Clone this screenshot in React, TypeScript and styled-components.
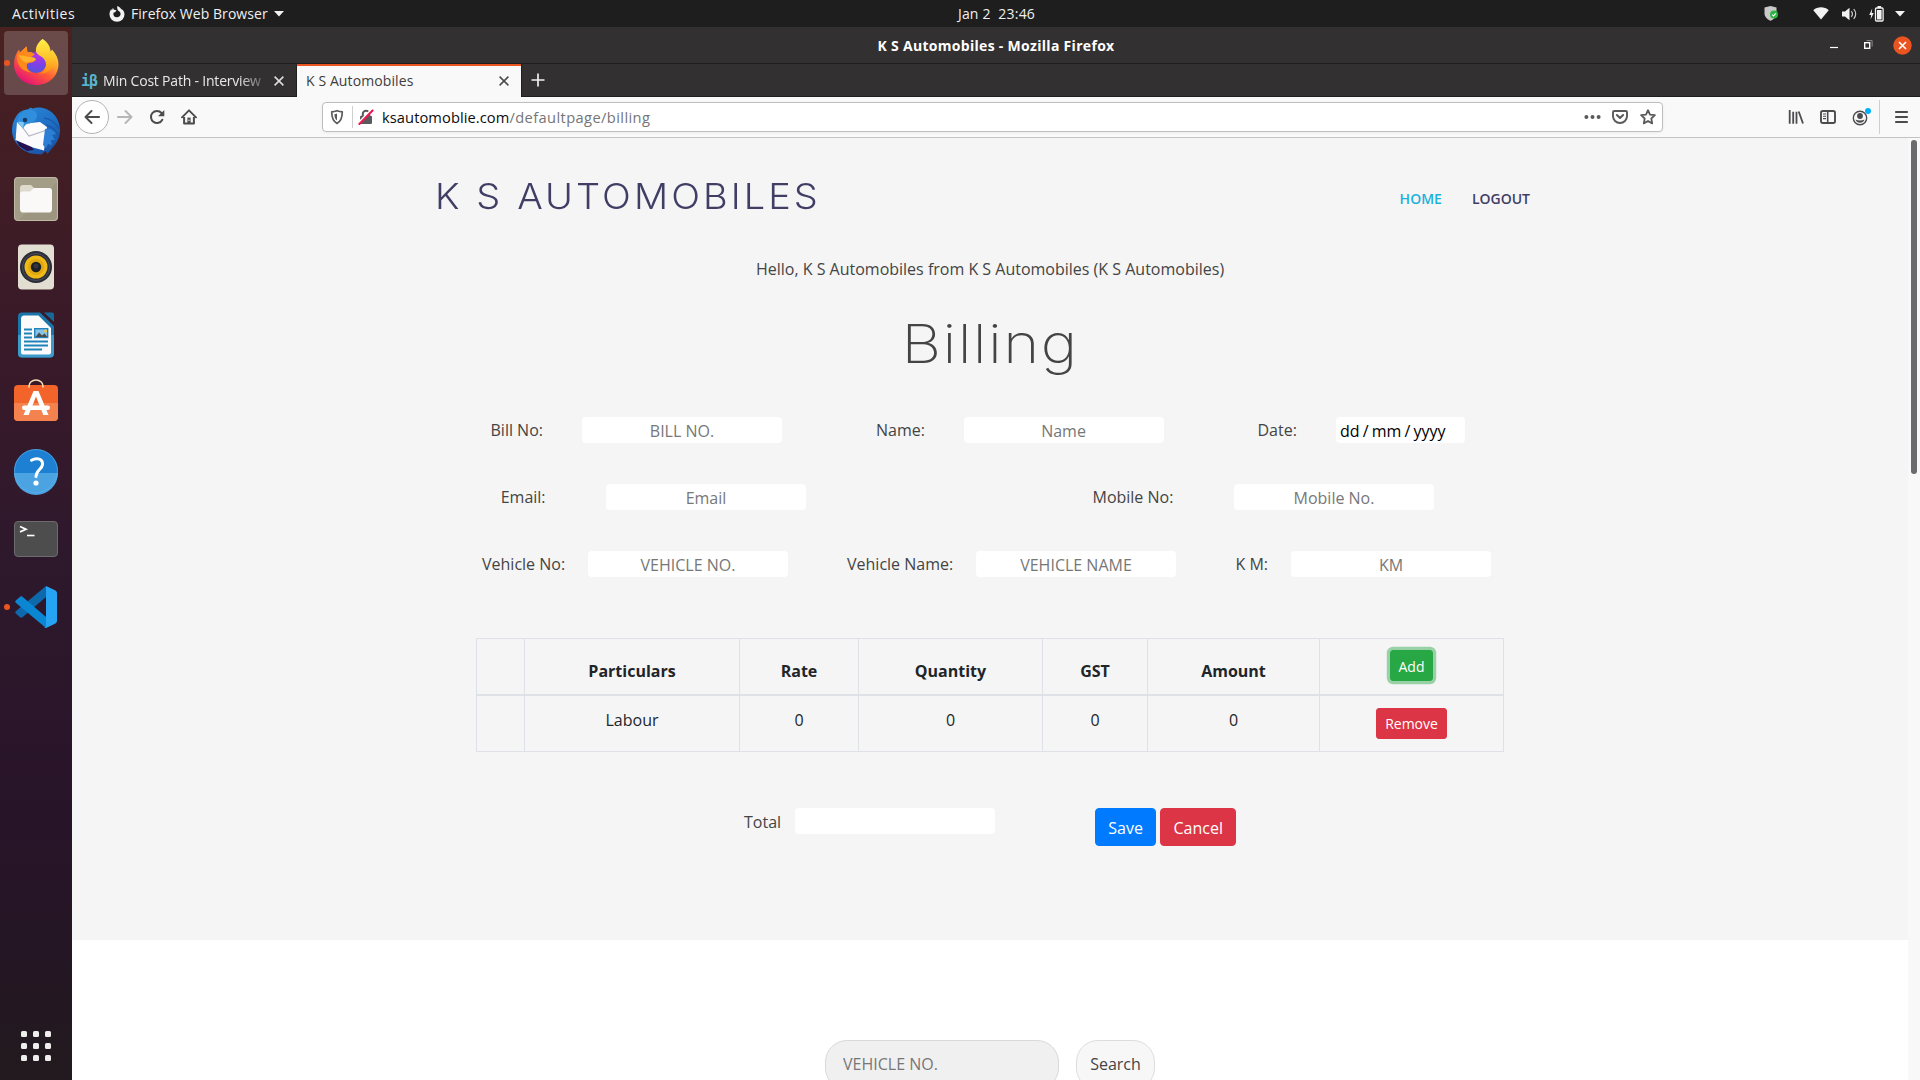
import React from "react";
import styled, { createGlobalStyle } from "styled-components";

const GlobalStyle = createGlobalStyle`
  * { box-sizing: border-box; }
  html, body { margin: 0; padding: 0; overflow: hidden; background: #fff; }
  body { font-family: "Open Sans", "Noto Sans", sans-serif; font-size: 16px; line-height: 24px; color: #444; }
  svg { display: block; flex: none; }
`;

/* ---------- desktop shell ---------- */

const Desktop = styled.div`
  width: 1920px;
  height: 1080px;
  display: grid;
  grid-template: 27px 1053px / 72px 1848px;
  overflow: hidden;
`;

const TopBar = styled.header`
  grid-column: 1 / -1;
  display: grid;
  grid-template-columns: 1fr auto 1fr;
  align-items: center;
  background: #1e1e1e;
  color: #f0f0f0;
  font-size: 14px;
  line-height: 26px;
`;

const TopLeft = styled.div`
  display: flex;
  align-items: center;
  padding-left: 12px;
`;

const Activities = styled.span`
  width: 97px;
  letter-spacing: 0.55px;
`;

const AppName = styled.span`
  margin: 0 6px 0 6px;
  letter-spacing: 0.05px;
`;

const Clock = styled.span`
  white-space: pre;
  letter-spacing: 0.2px;
  margin-left: 73px;
`;

const TopRight = styled.div`
  display: flex;
  align-items: center;
  justify-content: flex-end;
  padding-right: 15px;
`;

const Spacer = styled.span<{ $w: number }>`
  flex: none;
  width: ${(p) => p.$w}px;
`;

const Dock = styled.nav`
  display: flex;
  flex-direction: column;
  justify-content: space-between;
  background: linear-gradient(180deg, #49221f 0%, #431e24 10%, #391a29 30%, #2e182c 50%, #281429 75%, #241624 88%, #221a1e 100%);
  padding: 2px 0 16px;
`;

const DockList = styled.div`
  display: flex;
  flex-direction: column;
`;

const SlotHighlight = styled.div<{ $active?: boolean }>`
  width: 64px;
  height: 64px;
  border-radius: 4px;
  display: flex;
  align-items: center;
  background: ${(p) => (p.$active ? "rgba(255,255,255,0.19)" : "transparent")};
`;

const SlotRow = styled.div`
  height: 68px;
  padding: 2px 4px;
`;

const RunDot = styled.i<{ $on?: boolean }>`
  width: 6px;
  height: 6px;
  border-radius: 50%;
  background: ${(p) => (p.$on ? "#e95420" : "transparent")};
`;

const AppsGrid = styled.div`
  display: grid;
  grid-template-columns: repeat(3, 6px);
  gap: 6px;
  padding-left: 21px;
  padding-bottom: 3px;
`;

const AppsDot = styled.i`
  height: 6px;
  border-radius: 1.5px;
  background: #f0eeec;
`;

/* ---------- browser chrome ---------- */

const Window = styled.section`
  display: grid;
  grid-template-rows: 36px 34px 41px 1fr;
  min-height: 0;
  overflow: hidden;
`;

const TitleBar = styled.div`
  display: grid;
  grid-template-columns: 1fr auto 1fr;
  align-items: center;
  background: #333031;
`;

const WindowTitle = styled.b`
  color: #fff;
  font-size: 14px;
  line-height: 34px;
  padding-top: 2px;
  letter-spacing: 0.3px;
`;

const WindowButtons = styled.div`
  display: flex;
  justify-content: flex-end;
  align-items: center;
  padding-right: 8px;
`;

const TabStrip = styled.div`
  display: flex;
  background: #333031;
  border-top: 1px solid #1e1e1e;
`;

const Tab = styled.div<{ $active?: boolean }>`
  width: ${(p) => (p.$active ? 224 : 225)}px;
  display: flex;
  align-items: center;
  font-size: 14px;
  color: ${(p) => (p.$active ? "#3d3d3d" : "#e8e8e8")};
  background: ${(p) => (p.$active ? "#f9f9f9" : "transparent")};
  border-top: 2px solid ${(p) => (p.$active ? "#e95420" : "transparent")};
  border-bottom: 1px solid ${(p) => (p.$active ? "#f9f9f9" : "#1e1e1e")};
  border-right: ${(p) => (p.$active ? "none" : "1px solid #1e1e1e")};
  padding: 0 11px 0 9px;
`;

const TabRest = styled.div`
  flex: 1;
  display: flex;
  align-items: center;
  border-left: 1px solid #1e1e1e;
  border-bottom: 1px solid #1e1e1e;
  padding-left: 9px;
`;

const Favicon = styled.span`
  width: 22px;
  color: #57b4cc;
  font: bold 15px/20px "DejaVu Sans Mono", monospace;
  letter-spacing: -1px;
`;

const TabTitle = styled.span<{ $faded?: boolean }>`
  flex: 1;
  min-width: 0;
  white-space: nowrap;
  line-height: 24px;
  letter-spacing: ${(p) => (p.$faded ? -0.2 : 0.1)}px;
  ${(p) => p.$faded && "mask-image: linear-gradient(90deg, #000 80%, transparent 99%);"}
`;

const Toolbar = styled.div`
  display: flex;
  align-items: center;
  background: #f9f9fa;
  border-bottom: 1px solid #c4c4c4;
  padding-left: 3px;
`;

const BackButton = styled.span`
  width: 34px;
  height: 34px;
  border-radius: 50%;
  border: 1px solid #b4b4b4;
  background: #fff;
  display: grid;
  place-items: center;
  margin-right: 8px;
`;

const UrlBar = styled.div`
  width: 1341px;
  height: 30px;
  display: flex;
  align-items: center;
  background: #fff;
  border: 1px solid #bebebe;
  border-radius: 4px;
  padding: 0 6px 0 6px;
  box-shadow: 0 1px 3px rgba(0, 0, 0, 0.06);
`;

const UrlDivider = styled.i<{ $h: number }>`
  width: 1px;
  height: ${(p) => p.$h}px;
  background: #cfcfd0;
  flex: none;
`;

const UrlText = styled.span`
  flex: 1;
  font-size: 14.67px;
  color: #757577;
  letter-spacing: 0.4px;
  padding-left: 8px;
`;

const UrlHost = styled.span`
  color: #0c0c0d;
  letter-spacing: 0.08px;
`;

/* ---------- page ---------- */

const Viewport = styled.main`
  display: grid;
  grid-template-columns: 1836px 12px;
  min-height: 0;
  overflow: hidden;
`;

const Page = styled.div`
  background: #fff;
  overflow: hidden;
`;

const ScrollTrack = styled.div`
  background: #f8f8f8;
  padding: 2px 3px;
`;

const ScrollThumb = styled.div`
  width: 6px;
  height: 334px;
  border-radius: 3px;
  background: #6b6b6d;
`;

const BillingSection = styled.section`
  height: 802px;
  background: #f5f5f5;
  padding-left: 348px;
`;

const SiteHeader = styled.header`
  height: 119px;
  width: 1140px;
  padding: 33px 30px 0 15px;
  display: flex;
  justify-content: space-between;
`;

const Logo = styled.h1`
  margin: 0;
  font-family: "Inter", "Lato", sans-serif;
  font-weight: 300;
  font-size: 34.7px;
  line-height: 50px;
  letter-spacing: 2.8px;
  color: #413e66;
  transform: scaleX(1.094);
  transform-origin: 0 50%;
`;

const SiteNav = styled.nav`
  display: flex;
  gap: 30px;
  font-size: 14px;
  font-weight: 600;
  line-height: 56px;
`;

const NavLink = styled.a<{ $active?: boolean }>`
  color: ${(p) => (p.$active ? "#1bb1dc" : "#413e66")};
`;

const Greeting = styled.p`
  margin: 0;
  width: 1140px;
  text-align: center;
`;

const PageTitle = styled.h2`
  margin: 29px 0 0;
  width: 1140px;
  text-align: center;
  font-family: "Inter", "Lato", sans-serif;
  font-weight: 250;
  font-size: 54px;
  line-height: 68px;
  letter-spacing: 1.2px;
  color: #444;
  transform: scaleX(1.14);
`;

const FormRow = styled.div<{ $cols: string; $top: number }>`
  display: grid;
  grid-template-columns: ${(p) => p.$cols};
  height: 26px;
  margin-top: ${(p) => p.$top}px;
`;

const Label = styled.label`
  white-space: nowrap;
  padding-top: 1px;
`;

const TextInput = styled.input`
  width: 200px;
  height: 26px;
  border: 0;
  border-radius: 4px;
  background: #fff;
  padding: 2px 2px 0;
  font: 16px "Open Sans", sans-serif;
  text-align: center;
  color: #444;
  &::placeholder { color: #777; opacity: 1; }
`;

const DateInput = styled.div`
  width: 129px;
  height: 26px;
  border-radius: 4px;
  background: #fff;
  color: #000;
  padding: 2px 4px 0;
  word-spacing: -1px;
  white-space: nowrap;
`;

const ItemsTable = styled.table`
  width: 1027px;
  margin: 61px 0 0 56px;
  table-layout: fixed;
  border-collapse: collapse;
  color: #212529;
  text-align: center;
  th, td { border: 1px solid #dee2e6; padding: 12px 0; }
  th { height: 56px; padding-bottom: 11px; vertical-align: bottom; border-bottom-width: 2px; }
  th:last-child { vertical-align: top; padding: 11px 0 0; }
  td { height: 56px; vertical-align: top; }
`;

const Button = styled.button<{ $tone: string; $small?: boolean; $ring?: boolean }>`
  display: inline-block;
  vertical-align: top;
  height: ${(p) => (p.$small ? 31 : 38)}px;
  padding: ${(p) => (p.$small ? "1px 8px 0" : "3px 12.3px 0")};
  border: 1px solid ${(p) => p.$tone};
  border-radius: ${(p) => (p.$small ? 3 : 4)}px;
  background: ${(p) => p.$tone};
  color: #fff;
  font: ${(p) => (p.$small ? 14 : 16)}px "Open Sans", sans-serif;
  box-shadow: ${(p) => (p.$ring ? "0 0 0 3.2px rgba(40,167,69,0.45)" : "none")};
`;

const TotalRow = styled.div`
  display: flex;
  margin: 56px 0 0 324px;
`;

const TotalLabel = styled.label`
  width: 51px;
  padding-top: 2px;
`;

const Actions = styled.div`
  display: flex;
  gap: 4px;
  margin-left: 100px;
`;

const SearchSection = styled.section`
  padding: 100px 0 0 753px;
  display: flex;
  gap: 17px;
`;

const SearchInput = styled.input`
  width: 234px;
  height: 50px;
  flex: none;
  border: 1px solid #d9d9d9;
  border-radius: 22px;
  background: #f0f0f0;
  padding: 0 17px 2px;
  font: 16px "Open Sans", sans-serif;
  &::placeholder { color: #777; opacity: 1; }
`;

const SearchButton = styled.button`
  width: 79px;
  height: 50px;
  flex: none;
  border: 1px solid #ddd;
  border-radius: 22px;
  background: #f7f7f7;
  color: #444;
  padding: 0 0 2px;
  font: 16px "Open Sans", sans-serif;
`;

/* ---------- icons ---------- */

const Caret = () => (
  <svg width="10" height="6" viewBox="0 0 10 6"><path d="M0 0h10L5 5.6z" fill="#f2f2f2" /></svg>
);

const CloseX = ({ color }: { color: string }) => (
  <svg width="12" height="12" viewBox="0 0 12 12"><path d="M1.600 1.600l8.800 8.800M10.400 1.600l-8.800 8.800" stroke={color} strokeWidth="1.500" /></svg>
);

const FirefoxMono = () => (
  <svg width="16" height="16" viewBox="0 0 16 16">
    <path fill="#f2f2f2" fillRule="evenodd" d="M8.400 0c2.200.9 3.200 2 3.700 3.100C14.200 4 15.500 6 15.500 8.500A7.500 7.300 0 0 1 .5 8.500c0-2.200.6-4 1.800-5.500l.5 1.400L4 1.800l.8 1.900c1.200-.1 2 .2 2.700.8L6 6.200l-1.600.5C4 9.800 5.500 11.300 8 11.300c2.100 0 3.600-1.300 3.600-3.200 0-1.500-.8-2.600-2-3.100C8.300 3.700 7.900 1.800 8.400 0z" />
  </svg>
);

const ShieldStatus = () => (
  <svg width="15" height="17" viewBox="0 0 15 17">
    <path d="M6.500 1l6 1.600v5.600c0 3.600-2.600 6-6 7.600-3.400-1.600-6-4-6-7.600V2.600z" fill="#c9c9c9" />
    <circle cx="10" cy="9.500" r="4" fill="#2fb344" />
    <path d="M8.200 9.600l1.300 1.300 2.400-2.600" fill="none" stroke="#fff" strokeWidth="1.100" />
  </svg>
);

const Wifi = () => (
  <svg width="16" height="13" viewBox="0 0 16 13"><path d="M8 12.500L.3 3.200C4.500-.6 11.500-.6 15.700 3.200z" fill="#f2f2f2" /></svg>
);

const Volume = () => (
  <svg width="15" height="14" viewBox="0 0 15 14">
    <path d="M0 4.500h3L7.500.7v12.600L3 9.500H0z" fill="#f2f2f2" />
    <path d="M9.300 4.300a3.800 3.800 0 0 1 0 5.400M11.700 2.200a6.800 6.800 0 0 1 0 9.600" fill="none" stroke="#cfcfcf" strokeWidth="1.200" />
  </svg>
);

const Battery = () => (
  <svg width="15" height="16" viewBox="0 0 15 16">
    <path d="M3.200 2.500L.2 9h2L1.600 13.500 4.700 7h-2z" fill="#f2f2f2" />
    <rect x="6.500" y="2" width="7.600" height="13" rx="1" fill="none" stroke="#f2f2f2" strokeWidth="1.300" />
    <rect x="8.500" y="0" width="3.600" height="2" fill="#f2f2f2" />
    <rect x="8" y="4" width="4.600" height="9.500" fill="#f2f2f2" />
  </svg>
);

const Minimise = () => (
  <svg width="8" height="18" viewBox="0 0 8 18"><path d="M0 11.500h8" stroke="#fff" strokeWidth="1.200" /></svg>
);

const Restore = () => (
  <svg width="9" height="10" viewBox="0 0 9 10">
    <rect x=".7" y="2.700" width="5" height="5.600" fill="none" stroke="#fff" strokeWidth="1.400" />
    <path d="M2.500.6h5.600v6" fill="none" stroke="#8d8b8c" strokeWidth="1" />
  </svg>
);

const CloseWindow = () => (
  <svg width="19" height="19" viewBox="0 0 19 19">
    <circle cx="9.500" cy="9.500" r="9.200" fill="#e95420" />
    <path d="M6 6l7 7M13 6l-7 7" stroke="#fff" strokeWidth="1.600" />
  </svg>
);

const Arrow = ({ color, flip }: { color: string; flip?: boolean }) => (
  <svg width="16" height="16" viewBox="0 0 16 16">
    <path transform={flip ? "translate(16 0) scale(-1 1)" : undefined} d="M7.500 2L1.500 8l6 6M1.700 8H15.200" fill="none" stroke={color} strokeWidth="1.900" strokeLinecap="round" strokeLinejoin="round" />
  </svg>
);

const Reload = () => (
  <svg width="16" height="16" viewBox="0 0 16 16">
    <path d="M13.300 10.700A6 6 0 1 1 12.500 4" fill="none" stroke="#4c4c4f" strokeWidth="2" strokeLinecap="round" />
    <path d="M15.300 1v6.300H9z" fill="#4c4c4f" />
  </svg>
);

const Home = () => (
  <svg width="16" height="16" viewBox="0 0 16 16">
    <path d="M1 8.300L8 1.300l7 7" fill="none" stroke="#4c4c4f" strokeWidth="1.900" strokeLinecap="round" strokeLinejoin="round" />
    <path d="M3.100 8v6.500h9.800V8" fill="none" stroke="#4c4c4f" strokeWidth="2" strokeLinejoin="round" />
    <path d="M6.400 8.600h3.200V15H6.400z" fill="#4c4c4f" />
    <circle cx="8" cy="11.300" r=".7" fill="#fff" />
  </svg>
);

const UrlShield = () => (
  <svg width="16" height="16" viewBox="0 0 16 16">
    <path d="M8 1.700c2 .8 3.600 1.100 5.300 1.100 0 5.500-.9 9.300-5.300 11.600C3.600 12.100 2.700 8.300 2.700 2.800 4.400 2.800 6 2.500 8 1.700z" fill="none" stroke="#5a5a5d" strokeWidth="1.700" strokeLinejoin="round" />
    <path d="M8 4.600v6.900C6 10 5.500 8 5.400 5.200 6.400 5.100 7.200 4.900 8 4.600z" fill="#5a5a5d" />
  </svg>
);

const BrokenLock = () => (
  <svg width="16" height="16" viewBox="0 0 16 16">
    <path d="M4.800 7V5a3.200 3.200 0 0 1 6.400 0v2" fill="none" stroke="#5a5a5d" strokeWidth="2" />
    <rect x="2" y="6.800" width="12" height="8.200" rx="1.200" fill="#5a5a5d" />
    <path d="M.9 14.200L13.800 1" stroke="#fff" strokeWidth="3" />
    <path d="M1.400 15L14.600 1.500" stroke="#f0134d" strokeWidth="2" strokeLinecap="round" />
  </svg>
);

const Dots = () => (
  <svg width="17" height="16" viewBox="0 0 17 16"><g fill="#5a5a5d"><circle cx="2.400" cy="8" r="2" /><circle cx="8.500" cy="8" r="2" /><circle cx="14.600" cy="8" r="2" /></g></svg>
);

const Pocket = () => (
  <svg width="16" height="16" viewBox="0 0 16 16">
    <path d="M2.200 2h11.600c.7 0 1.200.5 1.200 1.200V7.200a7 6.800 0 0 1-14 0V3.200C1 2.500 1.500 2 2.200 2z" fill="none" stroke="#5a5a5d" strokeWidth="1.900" />
    <path d="M4.900 6L8 9l3.100-3" fill="none" stroke="#5a5a5d" strokeWidth="2" strokeLinecap="round" strokeLinejoin="round" />
  </svg>
);

const Star = () => (
  <svg width="16" height="16" viewBox="0 0 16 16">
    <path d="M8 1.200l2 4.400 4.900.6-3.600 3.300.9 4.900L8 12l-4.200 2.400.9-4.900L1.100 6.200 6 5.600z" fill="none" stroke="#5a5a5d" strokeWidth="1.800" strokeLinejoin="round" />
  </svg>
);

const Library = () => (
  <svg width="16" height="16" viewBox="0 0 16 16">
    <path d="M1.700 1v13.700M5.200 2.700v12M8.500 2.700v12M10.700 2.500l4.300 12" fill="none" stroke="#4c4c4f" strokeWidth="1.800" />
  </svg>
);

const SidebarIcon = () => (
  <svg width="16" height="16" viewBox="0 0 16 16">
    <rect x="1" y="2" width="14" height="12" rx="1.800" fill="none" stroke="#4c4c4f" strokeWidth="1.900" />
    <path d="M7.700 2v12" stroke="#4c4c4f" strokeWidth="1.600" />
    <path d="M3 5h3M3 7.300h3M3 9.600h3" stroke="#4c4c4f" strokeWidth="1.100" />
  </svg>
);

const Account = () => (
  <svg width="20" height="18" viewBox="0 0 20 18">
    <circle cx="8" cy="10" r="6.700" fill="none" stroke="#4c4c4f" strokeWidth="1.400" />
    <circle cx="8" cy="8" r="2.900" fill="#4c4c4f" />
    <path d="M3.500 11.500c2.500 1.300 6.500 1.300 9 0-.8 2.200-2.400 3.300-4.500 3.300s-3.700-1.100-4.500-3.300z" fill="#4c4c4f" />
    <circle cx="16" cy="3" r="3" fill="#00b0f4" />
  </svg>
);

const Menu = () => (
  <svg width="13" height="14" viewBox="0 0 13 14"><path d="M.8 2h11.400M.8 7h11.400M.8 12h11.400" stroke="#4c4c4f" strokeWidth="1.900" strokeLinecap="round" /></svg>
);

const Plus = () => (
  <svg width="14" height="14" viewBox="0 0 14 14"><path d="M7 .5v13M.5 7h13" stroke="#f0f0f0" strokeWidth="1.700" /></svg>
);

const FirefoxIcon = () => (
  <svg width="52" height="52" viewBox="0 0 52 52">
    <defs>
      <linearGradient id="fxBody" x1=".85" y1=".1" x2=".3" y2="1"><stop offset="0" stopColor="#fff04a" /><stop offset=".35" stopColor="#ffa62e" /><stop offset=".62" stopColor="#ff5a36" /><stop offset="1" stopColor="#e3107a" /></linearGradient>
      <linearGradient id="fxTail" x1=".5" y1="0" x2=".5" y2="1"><stop offset="0" stopColor="#fff04a" /><stop offset=".55" stopColor="#ffc22a" /><stop offset="1" stopColor="#ff8a16" /></linearGradient>
      <radialGradient id="fxGlobe" cx=".6" cy=".2" r=".9"><stop offset="0" stopColor="#b833e1" /><stop offset=".5" stopColor="#7a42e8" /><stop offset="1" stopColor="#4b5bd4" /></radialGradient>
    </defs>
    <path d="M32.500 2c4 3 5.500 6 6 9.500 1 1 2 2 2 3.500l1.500-2.500c4 4.500 6.500 9.500 6.500 14.500C48.500 39 39 48 26.500 48S4 39 4 27.500c0-6 2-11.500 5-15l1 3 6.500-6 1 6c3-.5 5 0 7 1.500z" fill="url(#fxBody)" />
    <circle cx="26" cy="25.500" r="10.500" fill="url(#fxGlobe)" />
    <path d="M32.500 2c-4.500 3.500-7 8-6.500 12 .5 4 5 4.500 8 8 4.500 5.500 1 13-5 14.500 8 1 16.500-5 16.500-14-.5-4-3-6-5-8 0-5-3-9.500-8-12.500z" fill="url(#fxTail)" />
    <path d="M16.500 9.500l1 6c3-.5 5 0 7 1.500 0 2-3 2-3.500 4 1 1.500 2.500 1.500 4.500 2-2 3-5.500 2.500-8 3.500-2 3 0 7.500 4.500 9C11.500 35 6 27 7 18.500l3-3z" fill="#ff8a1c" />
    <path d="M9 18.500c3-.5 8 1.500 15 2 1 .5 1.500 1 2 2-2 2.500-6 1.500-8 3C14 26 11 22.500 9 18.500z" fill="#ffb32c" />
  </svg>
);

const ThunderbirdIcon = () => (
  <svg width="52" height="52" viewBox="0 0 52 52">
    <defs><linearGradient id="tb" x1=".2" y1="0" x2=".8" y2="1"><stop offset="0" stopColor="#2a86d8" /><stop offset=".5" stopColor="#1f6fc4" /><stop offset="1" stopColor="#1a4fa0" /></linearGradient></defs>
    <path d="M18 4.500c1.500-2 3.500-2 4.500-1C36-1 50 10 50 25c0 7-3 13-7 17l-5.500 7-2-3-4 3.500L26 49C14 49 2 38 2 25c0-6 2-11 5-15 2-3 6-5.500 11-5.500z" fill="url(#tb)" />
    <path d="M5 32l4 9 8 5 7-1-10-13z" fill="#261250" />
    <path d="M7 17l5 2 18-2 7 5-3 23.500-11-3L5.500 35z" fill="#fbfbfd" />
    <path d="M10 19l9 12 18-6" fill="none" stroke="#b6b7c4" strokeWidth="1.200" />
    <path d="M7 17C8 9 13 5.500 19 4.500c8 0 10 6 6 11-2 2.500-5 2.500-8 3.500-2 .8-3 3-4 4.500-2-2-4-4.500-6-6.500z" fill="#2f8fdc" />
    <path d="M8 17c1.500-.5 4-.5 6 .500l-1 6c-2-2-3.500-4-5-6.500z" fill="#7fc7ee" />
    <path d="M35 24c4-1 9 1 11 5l-4 1 3 5-4 0 1 5-4-1-2 4-3-3z" fill="#2d7fd6" />
    <circle cx="15" cy="15" r="2.300" fill="#173a66" />
    <path d="M36 20c7 2 11 6 13 12M34 13c7 1 12 5 15 11" fill="none" stroke="#1757a6" strokeWidth="1.200" />
  </svg>
);

const FilesIcon = () => (
  <svg width="52" height="52" viewBox="0 0 52 52">
    <rect x="4" y="4" width="44" height="44" rx="4" fill="#a39c87" />
    <path d="M48 8v36a4 4 0 0 1-4 4H8z" fill="#958e79" opacity=".5" />
    <rect x="4.500" y="4.500" width="43" height="43" rx="3.500" fill="none" stroke="#bfb8a5" />
    <path d="M10 15a3 3 0 0 1 3-3h8l4 4v6H10z" fill="#dedace" />
    <path d="M10 21c0-1.500 1-2.500 2.500-2.500h7.500L24 15h15.500c1.500 0 2.500 1 2.500 2.500v19c0 1.500-1 3-2.500 3h-27c-1.500 0-2.500-1.500-2.500-3z" fill="#faf9f7" />
  </svg>
);

const SpeakerIcon = () => (
  <svg width="52" height="52" viewBox="0 0 52 52">
    <rect x="8" y="3.500" width="36" height="45" rx="4" fill="#e3ded2" />
    <circle cx="26" cy="26" r="16" fill="#2b2d37" />
    <circle cx="26" cy="26" r="13.500" fill="none" stroke="#4c4f5b" />
    <circle cx="26" cy="26" r="11.500" fill="#efb917" />
    <circle cx="26" cy="26" r="8" fill="#e0a810" />
    <circle cx="26" cy="26" r="5.200" fill="#1d1f24" />
    <circle cx="26" cy="25" r="2.500" fill="#33363c" />
  </svg>
);

const WriterIcon = () => (
  <svg width="52" height="52" viewBox="0 0 52 52">
    <path d="M12 3.500h18L44 17v27.500a4 4 0 0 1-4 4H12a4 4 0 0 1-4-4v-37a4 4 0 0 1 4-4z" fill="#1b75aa" />
    <path d="M8 26h36v18.500a4 4 0 0 1-4 4H12a4 4 0 0 1-4-4z" fill="#3d9bcc" />
    <path d="M13.500 6.500h15L41 19v24.500a2 2 0 0 1-2 2H13a2 2 0 0 1-2-2v-34a3 3 0 0 1 2.500-3z" fill="#fbfbfb" />
    <path d="M34 3.500h8a2 2 0 0 1 2 2V13z" fill="#146a9c" />
    <path d="M14 20.500h8M14 24.500h8M14 28.500h8M14 32.500h24M14 36.500h24M14 40.500h18" stroke="#2183bb" strokeWidth="2" />
    <rect x="24.700" y="19.700" width="13" height="8.800" fill="#85c3e8" stroke="#2183bb" strokeWidth="1.400" />
    <path d="M25.500 28l3.500-4.500 3 3 2.500-2 3 3.500z" fill="#4b4b4b" />
    <circle cx="35.500" cy="22" r="1.500" fill="#f5c63c" />
  </svg>
);

const SoftwareIcon = () => (
  <svg width="52" height="52" viewBox="0 0 52 52">
    <rect x="4" y="8" width="44" height="36" rx="4" fill="#f26429" />
    <path d="M4 26h44v14a4 4 0 0 1-4 4H8a4 4 0 0 1-4-4z" fill="#f4824f" />
    <path d="M19 10.500V9a7 6 0 0 1 14 0v1.500" fill="none" stroke="#f4dfb8" strokeWidth="1.600" />
    <path d="M23.500 14h5l10 24h-5.200L26 19.500 18.700 38h-5.200z" fill="#fff" />
    <rect x="12" y="28.500" width="28" height="4.500" rx="2.200" fill="#fff" />
  </svg>
);

const HelpIcon = () => (
  <svg width="52" height="52" viewBox="0 0 52 52">
    <circle cx="26" cy="26" r="22" fill="#1d80d2" />
    <path d="M4 28h44a22 22 0 0 1-44 0z" fill="#4ba3e2" />
    <circle cx="26" cy="26" r="21.500" fill="none" stroke="#62b0ea" strokeOpacity=".6" />
    <path d="M21.500 15.300C27 12 33 14 32.500 19.500 32 24.500 26 25 26 31.500" fill="none" stroke="#fff" strokeWidth="3" strokeLinecap="round" />
    <circle cx="26" cy="38" r="2.600" fill="#fff" />
  </svg>
);

const TerminalIcon = () => (
  <svg width="52" height="52" viewBox="0 0 52 52">
    <rect x="4.500" y="8.500" width="43" height="35" rx="3.500" fill="#4d4d4d" stroke="#6c6c6c" />
    <path d="M10 13.500l6 2.700-6 2.700" fill="none" stroke="#fff" strokeWidth="1.700" />
    <path d="M17 22.500h7.500" stroke="#fff" strokeWidth="1.600" />
  </svg>
);

const CodeIcon = () => (
  <svg width="52" height="52" viewBox="0 0 52 52">
    <path d="M36 5v11L12.500 36.300c-.8.700-1.700.6-2.500 0L6 32.700c-1-.9-1-1.900 0-2.800z" fill="#0e69ac" />
    <path d="M36 47V36L12.500 15.700c-.8-.7-1.700-.6-2.500 0L6 19.300c-1 .9-1 1.900 0 2.800z" fill="#0a86d3" />
    <path d="M36 5l9 4.200c1.200.6 2 1.500 2 3v27.600c0 1.500-.8 2.400-2 3L36 47c-1 .2-2-.2-2-.5 1.200.3 2-.5 2-2z" fill="#26a3f2" />
  </svg>
);

const apps = [
  { Icon: FirefoxIcon, active: true, running: true },
  { Icon: ThunderbirdIcon },
  { Icon: FilesIcon },
  { Icon: SpeakerIcon },
  { Icon: WriterIcon },
  { Icon: SoftwareIcon },
  { Icon: HelpIcon },
  { Icon: TerminalIcon },
  { Icon: CodeIcon, running: true },
];

const columns = [48, 215, 119, 184, 105, 172, 184];

export default function App() {
  return (
    <>
      <GlobalStyle />
      <Desktop>
        <TopBar>
          <TopLeft>
            <Activities>Activities</Activities>
            <FirefoxMono />
            <AppName>Firefox Web Browser</AppName>
            <Caret />
          </TopLeft>
          <Clock>Jan 2  23:46</Clock>
          <TopRight>
            <ShieldStatus /><Spacer $w={34} />
            <Wifi /><Spacer $w={13} />
            <Volume /><Spacer $w={12} />
            <Battery /><Spacer $w={11} />
            <Caret />
          </TopRight>
        </TopBar>

        <Dock>
          <DockList>
            {apps.map(({ Icon, active, running }, i) => (
              <SlotRow key={i}>
                <SlotHighlight $active={active}>
                  <RunDot $on={running} />
                  <Icon />
                </SlotHighlight>
              </SlotRow>
            ))}
          </DockList>
          <AppsGrid>
            {Array.from({ length: 9 }, (_, i) => <AppsDot key={i} />)}
          </AppsGrid>
        </Dock>

        <Window>
          <TitleBar>
            <span />
            <WindowTitle>K S Automobiles - Mozilla Firefox</WindowTitle>
            <WindowButtons>
              <Minimise /><Spacer $w={26} />
              <Restore /><Spacer $w={20} />
              <CloseWindow />
            </WindowButtons>
          </TitleBar>

          <TabStrip>
            <Tab>
              <Favicon>iβ</Favicon>
              <TabTitle $faded>Min Cost Path - Interview</TabTitle>
              <CloseX color="#e0e0e0" />
            </Tab>
            <Tab $active>
              <TabTitle>K S Automobiles</TabTitle>
              <CloseX color="#4a4a4a" />
            </Tab>
            <TabRest><Plus /></TabRest>
          </TabStrip>

          <Toolbar>
            <BackButton><Arrow color="#4c4c4f" /></BackButton>
            <Arrow color="#b6b6b8" flip /><Spacer $w={16} />
            <Reload /><Spacer $w={16} />
            <Home /><Spacer $w={125} />
            <UrlBar>
              <UrlShield /><Spacer $w={7} />
              <UrlDivider $h={22} /><Spacer $w={5} />
              <BrokenLock />
              <UrlText><UrlHost>ksautomoblie.com</UrlHost>/defaultpage/billing</UrlText>
              <Dots /><Spacer $w={11} />
              <Pocket /><Spacer $w={12} />
              <Star />
            </UrlBar>
            <Spacer $w={125} />
            <Library /><Spacer $w={16} />
            <SidebarIcon /><Spacer $w={16} />
            <Account /><Spacer $w={7} />
            <UrlDivider $h={34} /><Spacer $w={15} />
            <Menu />
          </Toolbar>

          <Viewport>
            <Page>
              <BillingSection>
                <SiteHeader>
                  <Logo>K S AUTOMOBILES</Logo>
                  <SiteNav>
                    <NavLink $active>HOME</NavLink>
                    <NavLink>LOGOUT</NavLink>
                  </SiteNav>
                </SiteHeader>
                <Greeting>Hello, K S Automobiles from K S Automobiles (K S Automobiles)</Greeting>
                <PageTitle>Billing</PageTitle>

                <FormRow $top={39} $cols="70.5px 91.5px 294px 87.5px 294px 78.5px 129px">
                  <span />
                  <Label>Bill No:</Label>
                  <TextInput placeholder="BILL NO." />
                  <Label>Name:</Label>
                  <TextInput placeholder="Name" />
                  <Label>Date:</Label>
                  <DateInput>dd / mm / yyyy</DateInput>
                </FormRow>
                <FormRow $top={41} $cols="80.7px 105.3px 486.5px 141.500px 200px">
                  <span />
                  <Label>Email:</Label>
                  <TextInput placeholder="Email" />
                  <Label>Mobile No:</Label>
                  <TextInput placeholder="Mobile No." />
                </FormRow>
                <FormRow $top={41} $cols="62px 106px 259px 129px 259.500px 55.500px 200px">
                  <span />
                  <Label>Vehicle No:</Label>
                  <TextInput placeholder="VEHICLE NO." />
                  <Label>Vehicle Name:</Label>
                  <TextInput placeholder="VEHICLE NAME" />
                  <Label>K M:</Label>
                  <TextInput placeholder="KM" />
                </FormRow>

                <ItemsTable>
                  <colgroup>{columns.map((w, i) => <col key={i} width={w} />)}</colgroup>
                  <thead>
                    <tr>
                      <th />
                      <th>Particulars</th>
                      <th>Rate</th>
                      <th>Quantity</th>
                      <th>GST</th>
                      <th>Amount</th>
                      <th><Button $tone="#28a745" $small $ring>Add</Button></th>
                    </tr>
                  </thead>
                  <tbody>
                    <tr>
                      <td />
                      <td>Labour</td>
                      <td>0</td>
                      <td>0</td>
                      <td>0</td>
                      <td>0</td>
                      <td><Button $tone="#dc3545" $small>Remove</Button></td>
                    </tr>
                  </tbody>
                </ItemsTable>

                <TotalRow>
                  <TotalLabel>Total</TotalLabel>
                  <TextInput />
                  <Actions>
                    <Button $tone="#007bff">Save</Button>
                    <Button $tone="#dc3545">Cancel</Button>
                  </Actions>
                </TotalRow>
              </BillingSection>

              <SearchSection>
                <SearchInput placeholder="VEHICLE NO." />
                <SearchButton>Search</SearchButton>
              </SearchSection>
            </Page>
            <ScrollTrack><ScrollThumb /></ScrollTrack>
          </Viewport>
        </Window>
      </Desktop>
    </>
  );
}
